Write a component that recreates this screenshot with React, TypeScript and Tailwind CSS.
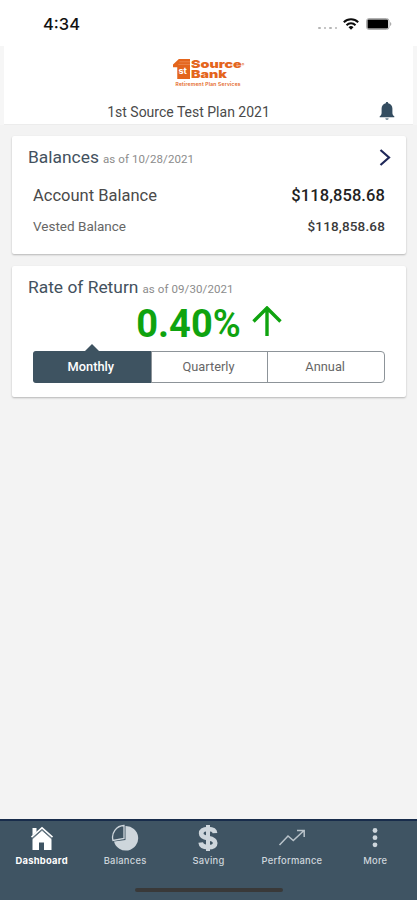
import { useState } from "react";

const periods = ["Monthly", "Quarterly", "Annual"];

const StatusBar = () => (
  <div className="h-[46px] bg-white flex items-start justify-between pl-[43px] pr-[25px] pt-[14px]">
    <span className="font-['Inter'] font-medium text-[16.500px] leading-5 text-[#111]">
      4:34
    </span>
    <div className="flex items-center h-5">
      <div className="flex gap-[3px] mt-2 mr-[6px]">
        {[0, 1, 2, 3].map((e) => (
          <span key={e} className="size-[2.5px] rounded-full bg-[#b5b5b5]" />
        ))}
      </div>
      <svg width="16" height="12" viewBox="0 0 16 12" className="mr-[7px]">
        <g fill="none" stroke="#0c0c0c" strokeWidth="2">
          <path d="M0.8 4.3a10.3 10.3 0 0 1 14.4 0" />
          <path d="M3.5 7.2a6.4 6.4 0 0 1 9 0" />
        </g>
        <path d="M8 11.7 5.5 9.2a3.6 3.6 0 0 1 5 0z" fill="#0c0c0c" />
      </svg>
      <svg width="26" height="12" viewBox="0 0 26 12">
        <rect x="0.5" y="0.5" width="22.5" height="11" rx="2.5" fill="#fff" stroke="#b0b0b0" />
        <rect x="1.5" y="1.5" width="20.5" height="9" rx="1" fill="#000" />
        <path d="M24.3 4v4c1.3-.6 1.3-3.4 0-4z" fill="#888" />
      </svg>
    </div>
  </div>
);

const Logo = () => (
  <div className="w-[72px] h-[30px] text-[#e4651c] font-['Inter']">
    <div className="flex h-[22px] pt-px">
      <div className="relative w-[18px]">
        <svg width="17" height="20" viewBox="0 0 16 20" preserveAspectRatio="none" className="block">
          <path d="M0 5.5 5.5 0H16v20H4V8.3H0z" fill="#e4651c" />
          <path d="M6 2.8h10M5 5.4h11" stroke="#ef9a68" strokeWidth=".6" />
        </svg>
        <span className="absolute left-[6px] top-[7px] text-[9px] leading-[9px] font-bold text-white">
          st
        </span>
      </div>
      <div className="origin-left scale-x-[1.3] text-[11px] leading-[10px] font-black">
        <div className="flex items-end">
          Source<span className="text-[3px] leading-[7px]">®</span>
        </div>
        <div>Bank</div>
      </div>
    </div>
    <div className="pl-[3px] pt-[1px] text-[5px] leading-[6px] font-semibold tracking-[0.2px] whitespace-nowrap">
      Retirement Plan Services
    </div>
  </div>
);

const Header = () => (
  <div className="h-[79px] bg-[#f6f6f6] px-1">
    <div className="h-full bg-white border-b border-[#ececec] flex flex-col items-center pt-[12px]">
      <Logo />
      <div className="w-full mt-[14px] grid grid-cols-[1fr_auto_1fr] items-center">
        <span />
        <span className="text-[14px] leading-[18px] text-[#4a4a4a] -ml-10">
          1st Source Test Plan 2021
        </span>
        <svg width="16" height="19" viewBox="0 0 16 19" className="justify-self-end mr-[18px]">
          <path
            d="M8 0c-.8 0-1.2.5-1.2 1.3C4 1.9 2.6 4 2.6 6.5V11c0 1.500-.8 2.500-1.900 3.300v.9h14.600v-.9c-1.100-.8-1.900-1.800-1.900-3.300V6.500c0-2.500-1.400-4.600-4.200-5.200C9.200.5 8.800 0 8 0z"
            fill="#344d60"
          />
          <path d="M6.300 16.200h3.400a1.700 1.700 0 0 1-3.400 0z" fill="#6e8290" />
        </svg>
      </div>
    </div>
  </div>
);

const CardTitle = ({ title, date }: { title: string; date: string }) => (
  <div className="flex items-baseline text-[#43515e]">
    <span className="text-[17.400px] leading-[21px]">{title}</span>
    <span className="ml-[4px] text-[11.500px] text-[#8c8c8c] tracking-[0.1px]">
      as of {date}
    </span>
  </div>
);

const BalancesCard = () => (
  <div className="h-[118px] bg-white rounded-[2px] shadow-[0_1px_2px_rgba(0,0,0,0.25)] pl-[16px] pr-[15px] pt-[11px]">
    <div className="flex items-center justify-between h-[21px]">
      <CardTitle title="Balances" date="10/28/2021" />
      <svg width="12" height="17" viewBox="0 0 12 17">
        <path d="m1.500 1 8.500 7.500L1.500 16" fill="none" stroke="#1f2859" strokeWidth="2.200" />
      </svg>
    </div>
    <div className="flex justify-between pl-[5px] pr-[6px] mt-[18px] leading-5 text-[#4a4a4a]">
      <span className="text-[16.500px]">Account Balance</span>
      <span className="text-[16.500px] tracking-[0.1px] font-medium text-[#222]">$118,858.68</span>
    </div>
    <div className="flex justify-between pl-[5px] pr-[6px] mt-[12px] leading-4 text-[#666]">
      <span className="text-[13.500px]">Vested Balance</span>
      <span className="text-[13.500px] tracking-[0.15px] font-medium text-[#3a3a3a]">$118,858.68</span>
    </div>
  </div>
);

const ReturnCard = () => {
  const [active, setActive] = useState<number>(0);

  return (
    <div className="h-[131px] bg-white rounded-[2px] shadow-[0_1px_2px_rgba(0,0,0,0.25)] pl-[16px] pr-[21px] pt-[11px]">
      <CardTitle title="Rate of Return" date="09/30/2021" />
      <div className="flex justify-center h-[53px] pt-[4px] pl-[5px]">
        <span className="text-[38px] leading-[45px] font-bold text-[#0fa30f]">
          0.40<span className="font-semibold">%</span>
        </span>
        <svg width="30" height="31" viewBox="0 0 30 31" className="ml-[11px] mt-[4px]">
          <path
            d="M15 30V2M1.500 15.500 15 2l13.500 13.500"
            fill="none"
            stroke="#0fa30f"
            strokeWidth="3.400"
          />
        </svg>
      </div>
      <div className="ml-[5px] h-[32px] grid grid-cols-3 rounded-[4px] border border-[#8d9499]">
        {periods.map((e, index) => (
          <button
            key={e}
            onClick={() => setActive(index)}
            className={`relative text-[12.800px] leading-[29px] ${
              index > 0 ? "border-l border-[#8d9499]" : ""
            } ${
              active === index
                ? "bg-[#3e5361] text-white font-medium rounded-l-[3px] -my-px -ml-px"
                : "text-[#666]"
            }`}
          >
            {active === index && (
              <svg
                width="16"
                height="8"
                viewBox="0 0 16 8"
                className="absolute -top-[7px] left-1/2 -translate-x-1/2"
              >
                <path d="M0 8 8 0l8 8z" fill="#3e5361" />
              </svg>
            )}
            <span className="relative -top-px -left-px">{e}</span>
          </button>
        ))}
      </div>
    </div>
  );
};

const HomeIcon = () => (
  <svg width="24" height="26" viewBox="0 0 24 26">
    <path d="M2.500 3h4v4l-4 3.500z" fill="#fff" />
    <path d="M12 5 2.500 13.500V25H9v-7.500h5V25h7.500V13.500z" fill="#fff" />
    <path d="M1.500 12.200 12 2.800l10.500 9.400" fill="none" stroke="#fff" strokeWidth="1.600" />
    <path d="M2 14.200 12 5.300l10 8.900" fill="none" stroke="#556875" strokeWidth=".8" />
  </svg>
);

const PieIcon = () => (
  <svg width="28" height="28" viewBox="0 0 28 28">
    <path d="M14.500 2A12.300 12.300 0 1 1 3 17.500l11.500-1.500z" fill="#ced6dc" />
    <path
      d="M13 1.500A11.800 11.800 0 0 0 2 16.500l11-2z"
      fill="none"
      stroke="#ced6dc"
      strokeWidth="1.300"
    />
  </svg>
);

const DollarIcon = () => (
  <svg width="20" height="28" viewBox="0 0 20 28" fill="none" stroke="#ced6dc">
    <path
      d="M17 9.200C16.800 6.300 14.300 5 10.200 5S3.200 6.500 3.200 9.400c0 3 2.800 3.900 7 4.700 4.200.8 7 1.800 7 4.800 0 2.800-2.900 4.200-7.200 4.200-4.300 0-7-1.500-7.300-4.600"
      strokeWidth="4.700"
    />
    <path d="M10 1v26" strokeWidth="4" />
  </svg>
);

const TrendIcon = () => (
  <svg width="28" height="20" viewBox="0 0 28 20" fill="none" stroke="#b9c3ca" strokeWidth="1.500">
    <path d="M1.500 17 10 8l5.300 4.500L26 2.500M19 2.500h7.200V9" />
  </svg>
);

const MoreIcon = () => (
  <svg width="8" height="22" viewBox="0 0 8 22" fill="#ced6dc">
    <circle cx="4" cy="3.500" r="2.400" />
    <circle cx="4" cy="10.700" r="2.400" />
    <circle cx="4" cy="17.800" r="2.400" />
  </svg>
);

const tabs = [
  { name: "Dashboard", icon: <HomeIcon /> },
  { name: "Balances", icon: <PieIcon /> },
  { name: "Saving", icon: <DollarIcon /> },
  { name: "Performance", icon: <TrendIcon /> },
  { name: "More", icon: <MoreIcon /> },
];

const TabBar = () => (
  <div className="h-[81px] bg-[#3f5463] border-t-2 border-[#182c4b] flex flex-col items-center">
    <div className="w-full grid grid-cols-5 pt-[3px]">
      {tabs.map((e, index) => (
        <div key={e.name} className="flex flex-col items-center">
          <div className="h-7 flex items-center justify-center">{e.icon}</div>
          <span
            className={`mt-[2px] text-[9.400px] leading-[14px] tracking-[0.25px] font-['Inter'] ${
              index === 0 ? "text-white font-bold" : "text-[#ced6dc] font-medium"
            }`}
          >
            {e.name}
          </span>
        </div>
      ))}
    </div>
    <div className="mt-[20px] w-[148px] h-[4px] rounded-full bg-[#393939]" />
  </div>
);

export default function App() {
  return (
    <div className="w-full h-[900px] bg-[#f3f3f3] flex flex-col font-['Roboto',sans-serif] overflow-hidden">
      <StatusBar />
      <Header />
      <div className="flex-1 flex flex-col gap-[12px] pl-[12px] pr-[11px] pt-[11px]">
        <BalancesCard />
        <ReturnCard />
      </div>
      <TabBar />
    </div>
  );
}
